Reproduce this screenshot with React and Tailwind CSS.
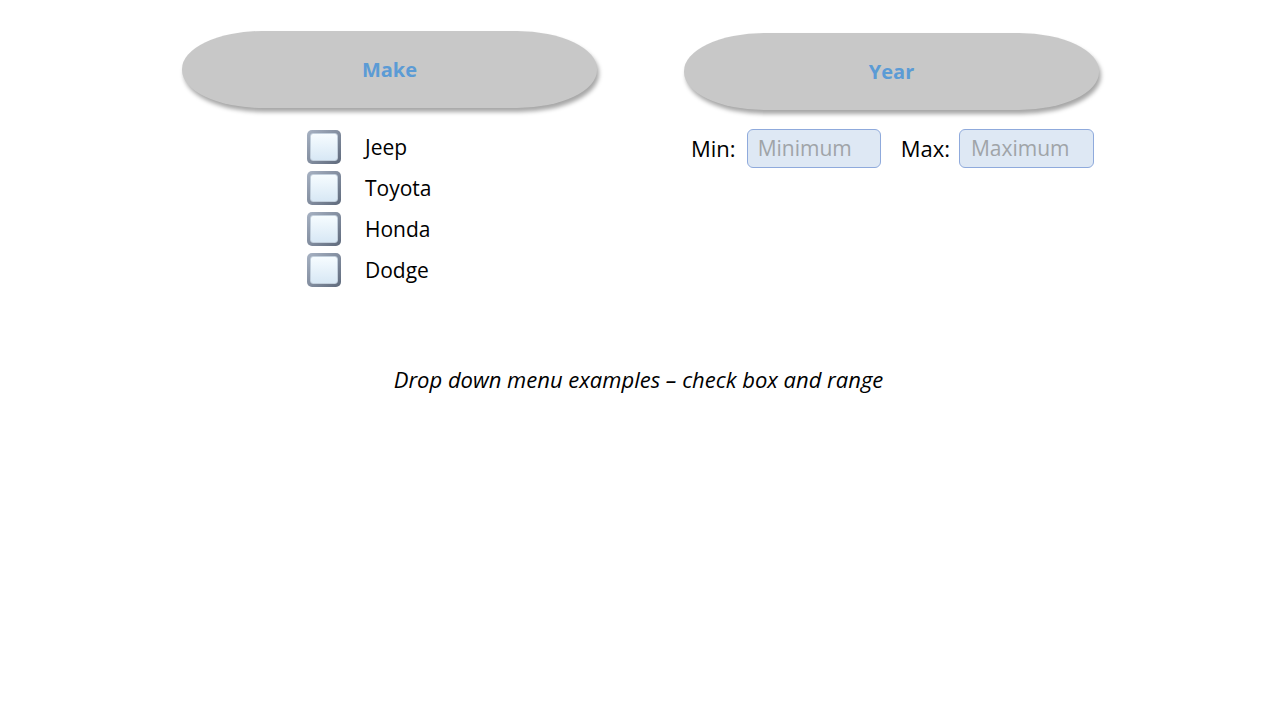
const makes = ['Jeep', 'Toyota', 'Honda', 'Dodge']

function Pill({ label }) {
  return (
    <div className="w-[415px] h-[77px] bg-[#c8c8c8] rounded-[80px/38px] shadow-[2px_4px_4px_rgba(0,0,0,0.35)] flex items-center justify-center">
      <span className="text-[20px] font-bold text-[#5b9bd5]">{label}</span>
    </div>
  )
}

function Box() {
  return (
    <div className="w-[34px] h-[34px] rounded-[5px] bg-gradient-to-br from-[#a8b3c4] to-[#5f6a7c] p-[3px]">
      <div className="w-full h-full rounded-[3px] bg-gradient-to-b from-[#f6fcff] to-[#d8e8f5] border border-[#c2cfdc]" />
    </div>
  )
}

export default function App() {
  return (
    <div className="w-[1280px] h-[720px] bg-white relative font-['Open_Sans',sans-serif] text-black">
      <div className="flex pl-[182px] pt-[31px] gap-[87px]">

        {/* Make column */}
        <div className="flex flex-col">
          <Pill label="Make" />
          <div className="flex flex-col gap-[7px] mt-[22px] pl-[125px]">
            {makes.map((m) => (
              <div key={m} className="flex items-center gap-[24px] h-[34px]">
                <Box />
                <span className="text-[21px] leading-none">{m}</span>
              </div>
            ))}
          </div>
        </div>

        {/* Year column */}
        <div className="flex flex-col mt-[2px]">
          <Pill label="Year" />
          <div className="flex items-center mt-[19px] pl-[7px] text-[22px]">
            <span>Min:</span>
            <div className="ml-[11px] w-[134px] h-[39px] rounded-[6px] border border-[#8faadc] bg-[#dee8f4] flex items-center pl-[10px] text-[21px] text-[#a0a4a8]">
              Minimum
            </div>
            <span className="ml-[20px]">Max:</span>
            <div className="ml-[9px] w-[135px] h-[39px] rounded-[6px] border border-[#8faadc] bg-[#dee8f4] flex items-center pl-[11px] text-[21px] text-[#a0a4a8]">
              Maximum
            </div>
          </div>
        </div>
      </div>

      <p className="mt-[76px] text-center pr-[3px] italic text-[22px]">
        Drop down menu examples – check box and range
      </p>
    </div>
  )
}
